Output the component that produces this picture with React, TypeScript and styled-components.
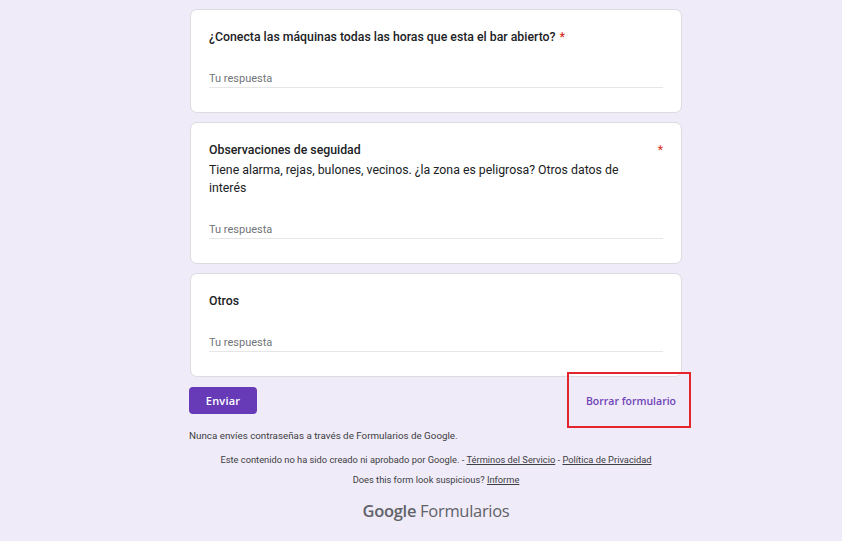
import React from "react";
import styled, { createGlobalStyle } from "styled-components";

const Global = createGlobalStyle`
  html, body { margin: 0; padding: 0; }
  body {
    background: #f0ebf8;
    font-family: Roboto, "Liberation Sans", Arial, sans-serif;
    color: #202124;
  }
`;

const Page = styled.div`
  width: 842px;
  height: 541px;
  overflow: hidden;
  padding-top: 9px;
  box-sizing: border-box;
`;

const Column = styled.div`
  margin-left: 189px;
  width: 494px;
  display: flex;
  flex-direction: column;
`;

const Card = styled.div`
  background: #fff;
  border: 1px solid #dadce0;
  border-radius: 7px;
  padding: 18px 18px 24px;
  margin: 0 1px 9px 1px;
  display: flex;
  flex-direction: column;
  gap: 22px;
`;

const Header = styled.div`
  display: flex;
  align-items: flex-start;
  justify-content: space-between;
  gap: 8px;
`;

const HeaderText = styled.div`
  display: flex;
  flex-direction: column;
  max-width: 430px;
`;

const Title = styled.div`
  font-size: 12.3px;
  font-weight: 500;
  line-height: 18px;
  color: #202124;
`;

const Desc = styled.div`
  margin-top: 2px;
  font-size: 12.3px;
  font-weight: 400;
  line-height: 18px;
  color: #202124;
`;

const Star = styled.span`
  color: #d93025;
  font-size: 12.3px;
  line-height: 18px;
  margin-left: 4px;
`;

const Answer = styled.div`
  box-sizing: border-box;
  height: 20px;
  padding-top: 2px;
  border-bottom: 1px solid #e6e6e6;
  font-size: 11px;
  line-height: 17px;
  color: #70757a;
`;

const Actions = styled.div`
  position: relative;
  display: flex;
  align-items: center;
  justify-content: space-between;
  margin-top: 1px;
`;

const SubmitButton = styled.button`
  width: 68px;
  height: 27px;
  border: none;
  border-radius: 4px;
  background: #673ab7;
  color: #fff;
  font-family: "Open Sans", Roboto, sans-serif;
  font-weight: 600;
  font-size: 11px;
  letter-spacing: 0.2px;
  padding: 0;
  cursor: pointer;
`;

const ClearButton = styled.button`
  background: transparent;
  border: none;
  color: #6f45b8;
  font-family: "Open Sans", Roboto, sans-serif;
  font-weight: 600;
  font-size: 10.5px;
  padding: 0 7px 0 0;
  cursor: pointer;
`;

const Highlight = styled.div`
  position: absolute;
  left: 378px;
  top: -15px;
  width: 120px;
  height: 52px;
  border: 2px solid #e3262d;
`;

const Note = styled.div`
  font-size: 9.8px;
  line-height: 12px;
  color: #3c4043;
  margin-top: 16px;
`;

const Footer = styled.div`
  display: flex;
  flex-direction: column;
  align-items: center;
  font-size: 9.3px;
  line-height: 12px;
  color: #3c4043;
  gap: 8px;
  margin-top: 12px;
`;

const FootLink = styled.a`
  color: #3c4043;
  text-decoration: underline;
`;

const Brand = styled.div`
  margin-top: 11px;
  font-family: "Open Sans", Roboto, sans-serif;
  font-size: 16.5px;
  color: #5f6368;
  letter-spacing: -0.3px;
`;

const BrandStrong = styled.span`
  font-weight: 600;
`;

export default function App() {
  return (
    <>
      <Global />
      <Page>
        <Column>
          <Card>
            <Header>
              <HeaderText>
                <Title>
                  ¿Conecta las máquinas todas las horas que esta el bar abierto?
                  <Star>*</Star>
                </Title>
              </HeaderText>
            </Header>
            <Answer>Tu respuesta</Answer>
          </Card>
          <Card>
            <Header>
              <HeaderText>
                <Title>Observaciones de seguidad</Title>
                <Desc>
                  Tiene alarma, rejas, bulones, vecinos. ¿la zona es peligrosa? Otros datos de interés
                </Desc>
              </HeaderText>
              <Star>*</Star>
            </Header>
            <Answer>Tu respuesta</Answer>
          </Card>
          <Card>
            <Header>
              <HeaderText>
                <Title>Otros</Title>
              </HeaderText>
            </Header>
            <Answer>Tu respuesta</Answer>
          </Card>
          <Actions>
            <SubmitButton>Enviar</SubmitButton>
            <ClearButton>Borrar formulario</ClearButton>
            <Highlight />
          </Actions>
          <Note>Nunca envíes contraseñas a través de Formularios de Google.</Note>
          <Footer>
            <div>
              Este contenido no ha sido creado ni aprobado por Google. -{" "}
              <FootLink>Términos del Servicio</FootLink> -{" "}
              <FootLink>Política de Privacidad</FootLink>
            </div>
            <div>
              Does this form look suspicious? <FootLink>Informe</FootLink>
            </div>
            <Brand>
              <BrandStrong>Google</BrandStrong> Formularios
            </Brand>
          </Footer>
        </Column>
      </Page>
    </>
  );
}
